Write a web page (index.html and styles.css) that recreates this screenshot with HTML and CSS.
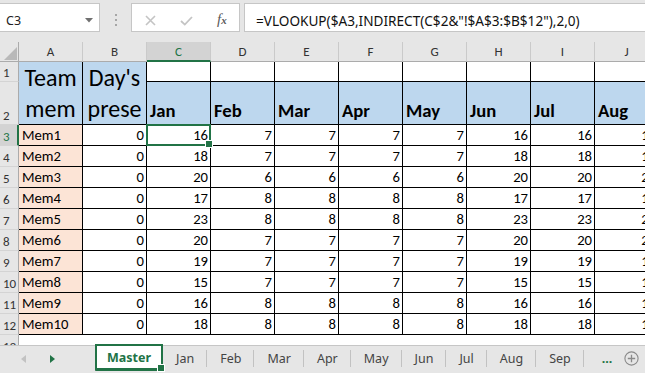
FILE: index.html
```html
<!DOCTYPE html>
<html>
<head>
<meta charset="utf-8">
<title>Master</title>
<link rel="stylesheet" href="styles.css">
</head>
<body>
<div class="app">
  <div class="fbar">
    <div class="namebox">
      <span>C3</span>
      <svg class="nb-arrow" width="8" height="5" viewBox="0 0 8 5"><path d="M0 0H8L4 4.5Z" fill="#707070"/></svg>
    </div>
    <div class="grip"><i></i><i></i><i></i></div>
    <div class="fxbox">
      <svg class="ico-x" width="11" height="11" viewBox="0 0 11 11"><path d="M1 1L10 10M10 1L1 10" stroke="#C4C4C4" stroke-width="1.6" fill="none"/></svg>
      <svg class="ico-ok" width="13" height="10" viewBox="0 0 13 10"><path d="M1 5L4.8 8.6L12 1" stroke="#C4C4C4" stroke-width="1.8" fill="none"/></svg>
      <span class="fx">f<span class="fx-x">x</span></span>
    </div>
    <div class="formula">=VLOOKUP($A3,INDIRECT(C$2&amp;"!$A$3:$B$12"),2,0)</div>
  </div>

  <div class="sheet">
    <div class="grid">
      <div class="corner"><svg width="18" height="19" viewBox="0 0 18 19"><path d="M17 5V18H4Z" fill="#B9B9B9"/></svg></div>
      <div class="ch">A</div><div class="ch">B</div><div class="ch sel">C</div><div class="ch">D</div><div class="ch">E</div><div class="ch">F</div><div class="ch">G</div><div class="ch">H</div><div class="ch">I</div><div class="ch">J</div>

      <div class="rh">1</div>
      <div class="c big">Team mem</div>
      <div class="c big">Day's prese</div>
      <div class="c"></div><div class="c"></div><div class="c"></div><div class="c"></div><div class="c"></div><div class="c"></div><div class="c"></div><div class="c"></div>

      <div class="rh">2</div>
      <div class="c mon">Jan</div><div class="c mon">Feb</div><div class="c mon">Mar</div><div class="c mon">Apr</div><div class="c mon">May</div><div class="c mon">Jun</div><div class="c mon">Jul</div><div class="c mon">Aug</div>

      <div class="rh sel">3</div><div class="c name">Mem1</div><div class="c num">0</div><div class="c num active">16</div><div class="c num">7</div><div class="c num">7</div><div class="c num">7</div><div class="c num">7</div><div class="c num">16</div><div class="c num">16</div><div class="c num">16</div>
      <div class="rh">4</div><div class="c name">Mem2</div><div class="c num">0</div><div class="c num">18</div><div class="c num">7</div><div class="c num">7</div><div class="c num">7</div><div class="c num">7</div><div class="c num">18</div><div class="c num">18</div><div class="c num">18</div>
      <div class="rh">5</div><div class="c name">Mem3</div><div class="c num">0</div><div class="c num">20</div><div class="c num">6</div><div class="c num">6</div><div class="c num">6</div><div class="c num">6</div><div class="c num">20</div><div class="c num">20</div><div class="c num">20</div>
      <div class="rh">6</div><div class="c name">Mem4</div><div class="c num">0</div><div class="c num">17</div><div class="c num">8</div><div class="c num">8</div><div class="c num">8</div><div class="c num">8</div><div class="c num">17</div><div class="c num">17</div><div class="c num">17</div>
      <div class="rh">7</div><div class="c name">Mem5</div><div class="c num">0</div><div class="c num">23</div><div class="c num">8</div><div class="c num">8</div><div class="c num">8</div><div class="c num">8</div><div class="c num">23</div><div class="c num">23</div><div class="c num">23</div>
      <div class="rh">8</div><div class="c name">Mem6</div><div class="c num">0</div><div class="c num">20</div><div class="c num">7</div><div class="c num">7</div><div class="c num">7</div><div class="c num">7</div><div class="c num">20</div><div class="c num">20</div><div class="c num">20</div>
      <div class="rh">9</div><div class="c name">Mem7</div><div class="c num">0</div><div class="c num">19</div><div class="c num">7</div><div class="c num">7</div><div class="c num">7</div><div class="c num">7</div><div class="c num">19</div><div class="c num">19</div><div class="c num">19</div>
      <div class="rh">10</div><div class="c name">Mem8</div><div class="c num">0</div><div class="c num">15</div><div class="c num">7</div><div class="c num">7</div><div class="c num">7</div><div class="c num">7</div><div class="c num">15</div><div class="c num">15</div><div class="c num">15</div>
      <div class="rh">11</div><div class="c name">Mem9</div><div class="c num">0</div><div class="c num">16</div><div class="c num">8</div><div class="c num">8</div><div class="c num">8</div><div class="c num">8</div><div class="c num">16</div><div class="c num">16</div><div class="c num">16</div>
      <div class="rh">12</div><div class="c name">Mem10</div><div class="c num">0</div><div class="c num">18</div><div class="c num">8</div><div class="c num">8</div><div class="c num">8</div><div class="c num">8</div><div class="c num">18</div><div class="c num">18</div><div class="c num">18</div>

      <div class="rh">13</div>
      <div class="e"></div><div class="e"></div><div class="e"></div><div class="e"></div><div class="e"></div><div class="e"></div><div class="e"></div><div class="e"></div><div class="e"></div><div class="e"></div>
    </div>
  </div>

  <div class="tabs">
    <div class="nav">
      <svg class="nav-prev" width="5" height="8" viewBox="0 0 5 8"><path d="M5 0V8L0 4Z" fill="#C2C2C2"/></svg>
      <svg class="nav-next" width="5" height="8" viewBox="0 0 5 8"><path d="M0 0V8L5 4Z" fill="#217346"/></svg>
    </div>
    <div class="tab active">Master</div>
    <div class="tab">Jan</div><span class="sep"></span>
    <div class="tab">Feb</div><span class="sep"></span>
    <div class="tab">Mar</div><span class="sep"></span>
    <div class="tab">Apr</div><span class="sep"></span>
    <div class="tab">May</div><span class="sep"></span>
    <div class="tab">Jun</div><span class="sep"></span>
    <div class="tab">Jul</div><span class="sep"></span>
    <div class="tab">Aug</div><span class="sep"></span>
    <div class="tab">Sep</div><span class="sep"></span>
    <div class="more">...</div>
    <svg class="add" width="15" height="15" viewBox="0 0 15 15"><circle cx="7.5" cy="7.5" r="6.6" stroke="#8A8A8A" stroke-width="1.1" fill="none"/><path d="M7.5 3.8V11.2M3.8 7.5H11.2" stroke="#8A8A8A" stroke-width="1.3"/></svg>
  </div>
</div>
</body>
</html>
```

FILE: styles.css
```css
* {
  box-sizing: border-box;
  margin: 0;
  padding: 0;
}

html, body {
  width: 645px;
  height: 373px;
  overflow: hidden;
}

body {
  font-family: "Carlito", "Lato", sans-serif;
  background: #E6E6E6;
  color: #000;
}

.app {
  width: 645px;
  height: 373px;
  display: flex;
  flex-direction: column;
  overflow: hidden;
}

/* ---------- formula bar ---------- */
.fbar {
  flex: none;
  height: 42px;
  display: flex;
  align-items: flex-start;
  padding-top: 3px;
  background: #E6E6E6;
}

.namebox {
  width: 100px;
  height: 29px;
  background: #fff;
  border: 1px solid #C6C6C6;
  border-left: none;
  display: flex;
  align-items: center;
  justify-content: space-between;
  padding: 6px 6px 0 6px;
  font: 12.5px "Noto Sans", sans-serif;
  color: #222;
}

.grip {
  width: 31px;
  height: 29px;
  display: flex;
  flex-direction: column;
  align-items: center;
  justify-content: center;
  gap: 3px;
  padding-top: 5px;
}

.grip i {
  display: block;
  width: 2px;
  height: 2px;
  background: #A6A6A6;
}

.fxbox {
  width: 109px;
  height: 29px;
  background: #fff;
  border: 1px solid #C6C6C6;
  display: flex;
  align-items: center;
  padding-top: 6px;
}

.ico-x { margin-left: 13px; }
.ico-ok { margin-left: 24px; }

.fx {
  margin-left: 24px;
  font: italic 15px "Liberation Serif", serif;
  color: #5A5A5A;
  margin-top: -3px;
}

.fx-x {
  font-size: 11px;
  font-weight: bold;
}

.formula {
  flex: 1;
  margin-left: 4px;
  height: 29px;
  background: #fff;
  border: 1px solid #C6C6C6;
  border-right: none;
  display: flex;
  align-items: center;
  padding: 6px 0 0 11px;
  font: 13.6px "Noto Sans", sans-serif;
  color: #111;
  white-space: nowrap;
  overflow: hidden;
}

/* ---------- sheet ---------- */
.sheet {
  flex: 1;
  overflow: hidden;
  background: #fff;
}

.grid {
  width: 659px;
  display: grid;
  grid-template-columns: 19px repeat(10, 64px);
  grid-template-rows: 20px 20px 43px repeat(11, 21px);
}

.corner {
  background: #E6E6E6;
  border-right: 1px solid #ABABAB;
  border-bottom: 1px solid #ABABAB;
}

.corner svg { display: block; }

.ch {
  background: #E6E6E6;
  border-right: 1px solid #CACACA;
  border-bottom: 1px solid #ABABAB;
  display: flex;
  align-items: center;
  justify-content: center;
  font-size: 13px;
  color: #333;
}

.ch.sel {
  background: #D3D3D3;
  border-bottom: 2px solid #217346;
  color: #217346;
}

.rh {
  background: #E6E6E6;
  border-right: 1px solid #ABABAB;
  border-bottom: 1px solid #D4D4D4;
  display: flex;
  align-items: flex-end;
  padding-left: 3px;
  font-size: 13px;
  line-height: 1.2;
  color: #333;
}

.rh.sel {
  background: #D3D3D3;
  border-right: 2px solid #217346;
  color: #217346;
}

.c {
  background: #fff;
  border-right: 1px solid #000;
  border-bottom: 1px solid #000;
  display: flex;
  align-items: flex-end;
  padding: 0 2px 0 3px;
  font-size: 14.67px;
  line-height: 1.2;
  white-space: nowrap;
  overflow: hidden;
}

.num { justify-content: flex-end; }

.name { background: #FCE4D6; }

.big {
  grid-row: span 2;
  background: #BDD7EE;
  justify-content: center;
  text-align: center;
  white-space: normal;
  font-size: 24px;
  line-height: 31px;
  padding: 0;
}

.mon {
  background: #BDD7EE;
  font-weight: bold;
  font-size: 18.67px;
  padding-bottom: 2px;
}

.active {
  position: relative;
  overflow: visible;
}

.active::after {
  content: "";
  position: absolute;
  left: -1px;
  top: -1px;
  right: -1px;
  bottom: -1px;
  border: 2px solid #217346;
}

.active::before {
  content: "";
  position: absolute;
  right: -3px;
  bottom: -3px;
  width: 6px;
  height: 6px;
  background: #217346;
  border: 1px solid #fff;
  z-index: 2;
}

.e { background: #fff; }

/* ---------- sheet tabs ---------- */
.tabs {
  flex: none;
  height: 28px;
  background: #E6E6E6;
  border-top: 1px solid #C6C6C6;
  display: flex;
  align-items: stretch;
  padding-bottom: 2px;
  font: 12.5px "Noto Sans", sans-serif;
  color: #444;
}

.nav {
  width: 95px;
  display: flex;
  align-items: center;
  padding-left: 21px;
  padding-top: 1px;
}

.nav-next { margin-left: 24px; }

.tab {
  display: flex;
  align-items: center;
  padding: 0 12px 0 13px;
}

.tab.active {
  margin-top: -1px;
  background: #fff;
  color: #217346;
  font-weight: bold;
  border-left: 1px solid #C6C6C6;
  border-right: 1px solid #C6C6C6;
  border-bottom: 2px solid #217346;
  padding: 1px 11px 0;
}

.sep {
  align-self: center;
  width: 1px;
  height: 17px;
  background: #C2C2C2;
}

.more {
  display: flex;
  align-items: center;
  margin-left: 18px;
  color: #217346;
  font-weight: bold;
}

.add {
  align-self: center;
  margin-left: 12px;
}
```
